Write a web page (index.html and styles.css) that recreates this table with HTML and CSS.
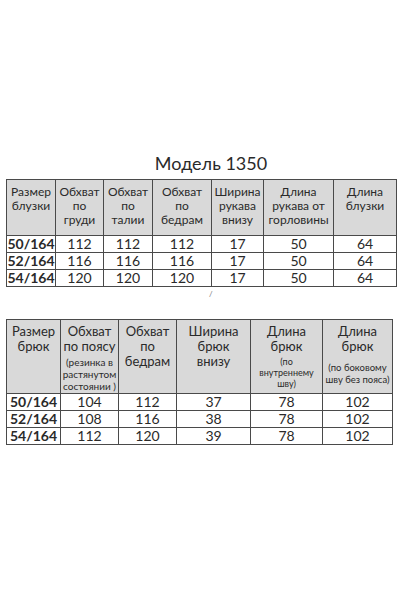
FILE: index.html
```
<html>
  <head>
    <meta charset="UTF-8">
    <title>Модель 1350</title>
    <link rel="stylesheet" href="styles.css">
  </head>
  <body>
    <div class="page">
      <h1 class="title">Модель 1350</h1>

      <!-- blouse sizes -->
      <table class="sizes blouse">
        <colgroup>
          <col style="width:49px"><col style="width:48px"><col style="width:49px"><col style="width:59px">
          <col style="width:52px"><col style="width:70px"><col style="width:63px">
        </colgroup>
        <tr class="head">
          <th>Размер<br>блузки</th>
          <th>Обхват<br>по<br>груди</th>
          <th>Обхват<br>по<br>талии</th>
          <th>Обхват<br>по<br>бедрам</th>
          <th>Ширина<br>рукава<br>внизу</th>
          <th>Длина<br>рукава от<br>горловины</th>
          <th>Длина<br>блузки</th>
        </tr>
        <tr><td class="size">50/164</td><td>112</td><td>112</td><td>112</td><td>17</td><td>50</td><td>64</td></tr>
        <tr><td class="size">52/164</td><td>116</td><td>116</td><td>116</td><td>17</td><td>50</td><td>64</td></tr>
        <tr><td class="size">54/164</td><td>120</td><td>120</td><td>120</td><td>17</td><td>50</td><td>64</td></tr>
      </table>

      <div class="gap"><span class="mark">/</span></div>

      <!-- trousers sizes -->
      <table class="sizes trousers">
        <colgroup>
          <col style="width:54px"><col style="width:58px"><col style="width:58px">
          <col style="width:74px"><col style="width:72px"><col style="width:70px">
        </colgroup>
        <tr class="head">
          <th>Размер<br>брюк</th>
          <th>Обхват<br>по поясу<br><span class="note">(резинка в<br>растянутом<br>состоянии )</span></th>
          <th>Обхват<br>по<br>бедрам</th>
          <th>Ширина<br>брюк<br>внизу</th>
          <th>Длина<br>брюк<br><span class="note tiny">(по<br>внутреннему<br>шву)</span></th>
          <th>Длина<br>брюк<br><span class="note side">(по боковому<br>шву без пояса)</span></th>
        </tr>
        <tr><td class="size">50/164</td><td>104</td><td>112</td><td>37</td><td>78</td><td>102</td></tr>
        <tr><td class="size">52/164</td><td>108</td><td>116</td><td>38</td><td>78</td><td>102</td></tr>
        <tr><td class="size">54/164</td><td>112</td><td>120</td><td>39</td><td>78</td><td>102</td></tr>
      </table>
    </div>
  </body>
</html>
```

FILE: styles.css
```
body {
  font-family: Lato, "Open Sans", sans-serif;
  background-color: #ffffff;
  color: #2a2a2a;
  margin: 0;
  padding: 0;
}
.page {
  padding: 152px 0 0 6px;
}
.title {
  font-size: 18px;
  font-weight: normal;
  line-height: 22px;
  margin: 0 0 5px;
  padding-left: 16px;
  text-align: center;
}
.sizes {
  border-collapse: collapse;
  table-layout: fixed;
  border: 1px solid #4a4a4a;
}
.blouse {
  width: 390px;
}
.trousers {
  width: 386px;
}
.sizes th,
.sizes td {
  border: 1px solid #4a4a4a;
  text-align: center;
  padding: 0;
}
.sizes th {
  background-color: #d9d9d9;
  font-weight: normal;
  vertical-align: top;
  white-space: nowrap;
}
.blouse th {
  font-size: 12px;
  line-height: 14px;
  padding-top: 5px;
}
.blouse .head {
  height: 56px;
}
.trousers th {
  font-size: 13px;
  line-height: 15px;
  padding-top: 4px;
}
.trousers .head {
  height: 74px;
}
.sizes td {
  font-size: 14px;
  line-height: 16px;
  height: 16px;
}
.sizes td.size {
  font-weight: bold;
}
.note {
  display: inline-block;
  font-size: 10px;
  line-height: 12px;
  margin-top: 2px;
}
.note.tiny {
  font-size: 9px;
  line-height: 11px;
}
.note.side {
  font-size: 9.5px;
  margin-top: 8px;
}
.gap {
  height: 32px;
  padding-left: 203px;
  line-height: 14px;
}
.mark {
  font-size: 8px;
  color: #777;
}
```
